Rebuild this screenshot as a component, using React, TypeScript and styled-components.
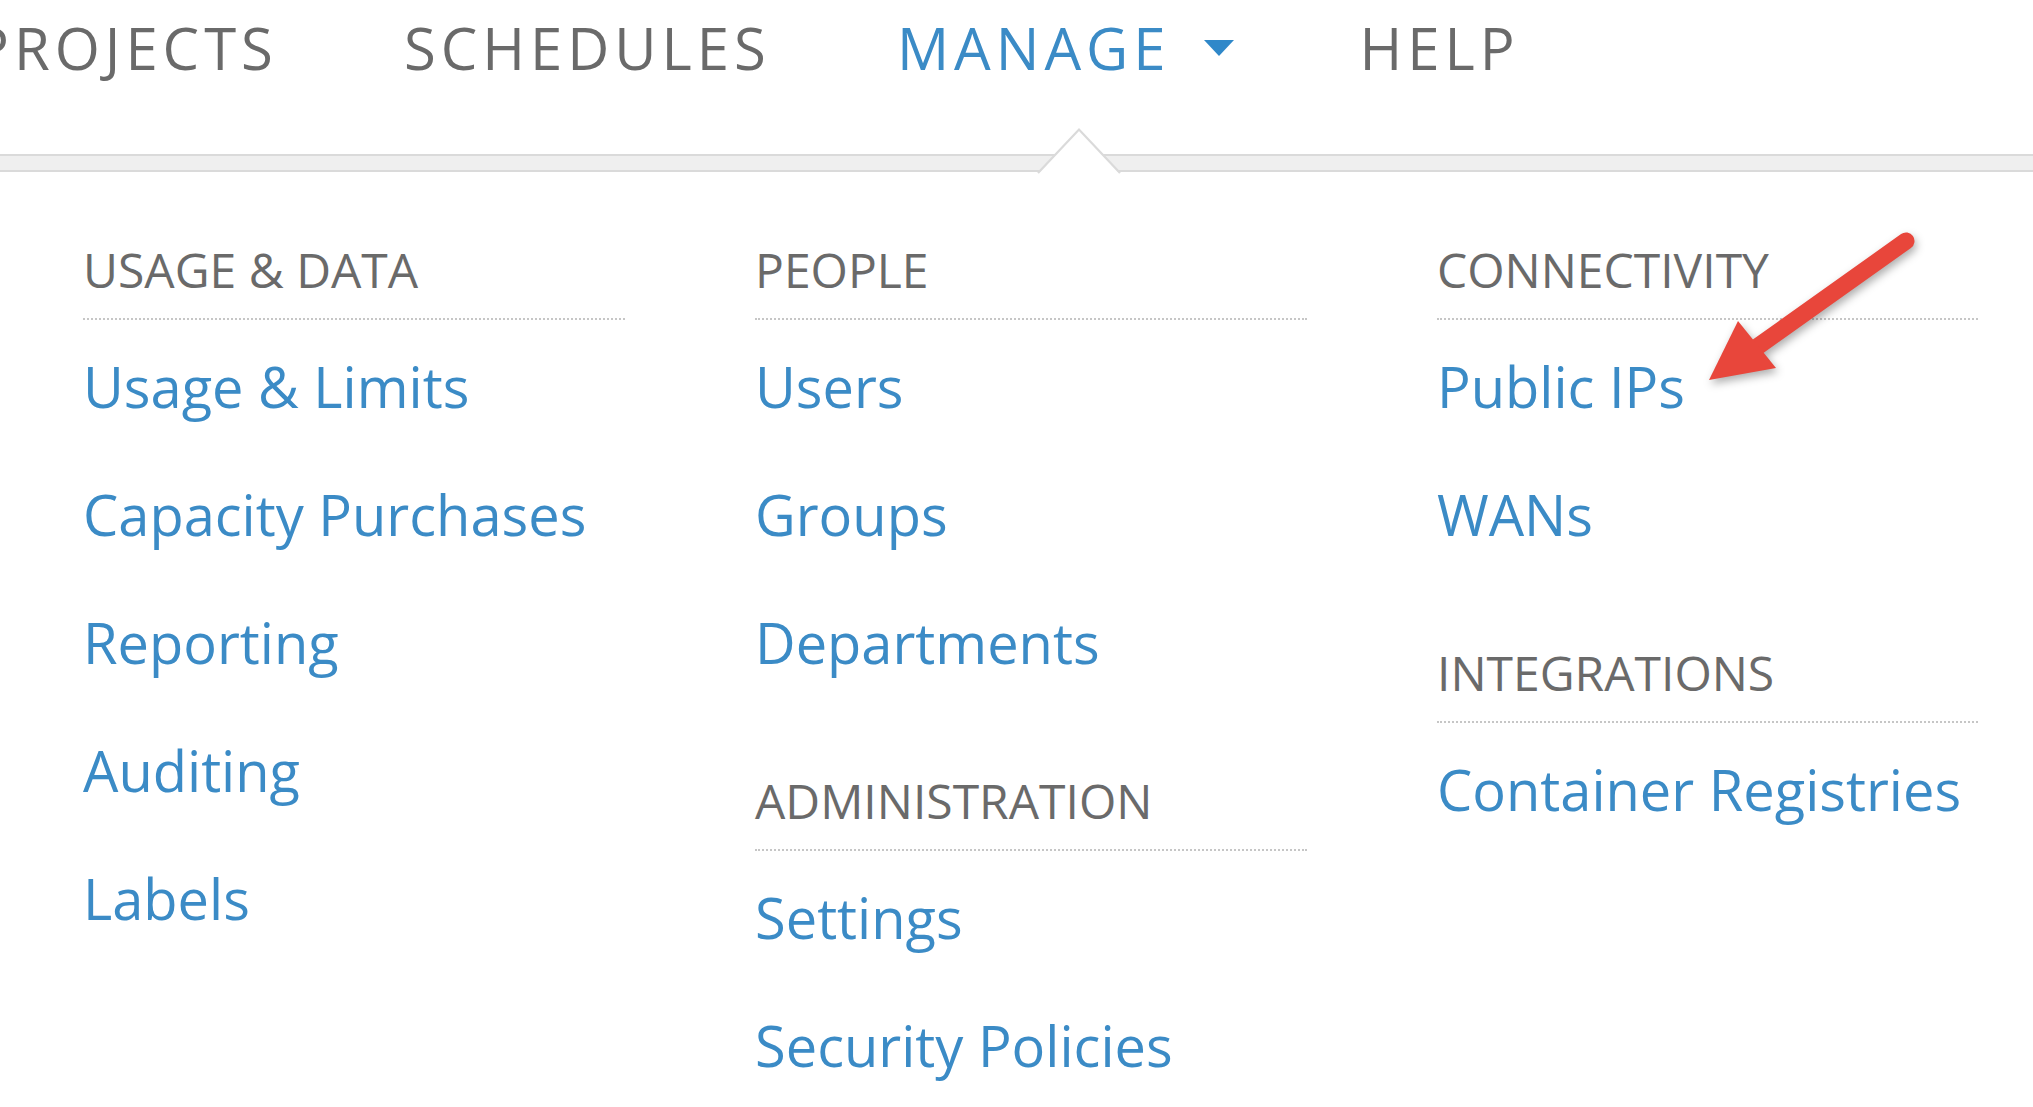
import React from "react";
import styled, { createGlobalStyle } from "styled-components";

const GlobalStyle = createGlobalStyle`
  html, body {
    margin: 0;
    padding: 0;
    background: #ffffff;
    overflow: hidden;
  }
  body {
    font-family: "Open Sans", "Noto Sans", sans-serif;
    -webkit-font-smoothing: antialiased;
  }
  * { box-sizing: border-box; }
`;

const BLUE = "#3b8bc6";
const GREY = "#6a6a6a";
const EDGE = "#dadada";

const Page = styled.div`
  position: relative;
  width: 2033px;
  height: 1107px;
  overflow: hidden;
  background: #fff;
`;

const TopBar = styled.header`
  padding-bottom: 58px;
`;

const Nav = styled.nav`
  display: flex;
  align-items: center;
  gap: 126px;
  height: 96px;
  margin-left: -26px;
`;

const NavItem = styled.a<{ $active?: boolean }>`
  display: flex;
  align-items: center;
  font-size: 58px;
  line-height: 96px;
  letter-spacing: 5px;
  font-weight: 400;
  white-space: nowrap;
  color: ${(p) => (p.$active ? BLUE : GREY)};
  text-decoration: none;
`;

const Caret = styled.span`
  display: inline-block;
  width: 0;
  height: 0;
  margin-left: 33px;
  margin-bottom: 1px;
  border-left: 15px solid transparent;
  border-right: 15px solid transparent;
  border-top: 16px solid #2f88c9;
`;

const Panel = styled.section``;

const PanelEdge = styled.div`
  position: relative;
  height: 18px;
  background: #efefef;
  border-top: 2px solid ${EDGE};
  border-bottom: 2px solid ${EDGE};
`;

const Notch = styled.svg`
  position: absolute;
  left: 1038px;
  top: -28px;
  overflow: visible;
`;

const Columns = styled.div`
  display: grid;
  grid-template-columns: 542px 552px 541px;
  column-gap: 130px;
  padding: 70px 0 0 83px;
`;

const Column = styled.div`
  display: flex;
  flex-direction: column;
`;

const Section = styled.div`
  & + & {
    margin-top: 67px;
  }
`;

const SectionTitle = styled.h3`
  margin: 0;
  font-size: 48px;
  line-height: 56px;
  font-weight: 400;
  color: ${GREY};
  padding-bottom: 20px;
  border-bottom: 2px dotted #c6c6c6;
  white-space: nowrap;
`;

const LinkList = styled.ul`
  list-style: none;
  margin: 0;
  padding: 2px 0 0;
`;

const MenuLink = styled.a`
  display: block;
  font-size: 56px;
  line-height: 128px;
  font-weight: 400;
  color: ${BLUE};
  text-decoration: none;
  white-space: nowrap;
`;

const Annotation = styled.svg`
  position: absolute;
  left: 1690px;
  top: 220px;
  overflow: visible;
  filter: drop-shadow(2px 4px 4px rgba(0, 0, 0, 0.32));
`;

type Sec = { title: string; links: string[] };

const columns: Sec[][] = [
  [
    {
      title: "USAGE & DATA",
      links: ["Usage & Limits", "Capacity Purchases", "Reporting", "Auditing", "Labels"],
    },
  ],
  [
    { title: "PEOPLE", links: ["Users", "Groups", "Departments"] },
    { title: "ADMINISTRATION", links: ["Settings", "Security Policies"] },
  ],
  [
    { title: "CONNECTIVITY", links: ["Public IPs", "WANs"] },
    { title: "INTEGRATIONS", links: ["Container Registries"] },
  ],
];

export default function App() {
  return (
    <>
      <GlobalStyle />
      <Page>
        <TopBar>
          <Nav>
            <NavItem>PROJECTS</NavItem>
            <NavItem>SCHEDULES</NavItem>
            <NavItem $active>
              MANAGE
              <Caret />
            </NavItem>
            <NavItem>HELP</NavItem>
          </Nav>
        </TopBar>
        <Panel>
          <PanelEdge>
            <Notch width="82" height="46" viewBox="0 0 82 46">
              <polygon points="0,46 41,1 82,46" fill="#ffffff" />
              <polyline
                points="0,45 41,1.5 82,45"
                fill="none"
                stroke={EDGE}
                strokeWidth="2.2"
              />
            </Notch>
          </PanelEdge>
          <Columns>
            {columns.map((col, ci) => (
              <Column key={ci}>
                {col.map((sec) => (
                  <Section key={sec.title}>
                    <SectionTitle>{sec.title}</SectionTitle>
                    <LinkList>
                      {sec.links.map((l) => (
                        <li key={l}>
                          <MenuLink>{l}</MenuLink>
                        </li>
                      ))}
                    </LinkList>
                  </Section>
                ))}
              </Column>
            ))}
          </Columns>
        </Panel>
        <Annotation width="240" height="180" viewBox="0 0 240 180">
          <line
            x1="216"
            y1="21"
            x2="60"
            y2="132"
            stroke="#e8463b"
            strokeWidth="17"
            strokeLinecap="round"
          />
          <polygon points="19,160 48,101 86,148" fill="#e8463b" />
        </Annotation>
      </Page>
    </>
  );
}
